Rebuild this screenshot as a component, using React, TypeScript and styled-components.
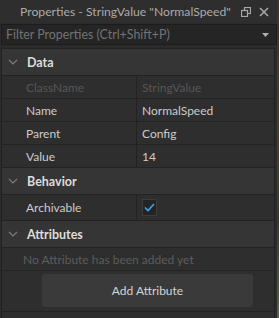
import React from "react";
import styled, { createGlobalStyle } from "styled-components";

const Global = createGlobalStyle`
  html, body { margin: 0; padding: 0; background: #2b2b2b; }
  body { font-family: "Lato", "Open Sans", sans-serif; }
`;

const Frame = styled.div`
  width: 279px;
  height: 318px;
  display: flex;
  overflow: hidden;
  background: #2b2b2b;
`;

const Main = styled.div`
  width: 277px;
  display: flex;
  flex-direction: column;
`;

const RightStrip = styled.div`
  width: 2px;
  background: linear-gradient(180deg, #3c3424 0%, #4a3f2a 40%, #3a3a2c 70%, #58604a 100%);
`;

const TitleBar = styled.div`
  height: 23px;
  display: flex;
  align-items: center;
  background: #2e2e2e;
`;

const Title = styled.div`
  flex: 1;
  min-width: 0;
  overflow: hidden;
  padding-left: 20px;
  font-size: 12.2px;
  color: #aaaaaa;
  white-space: nowrap;
`;

const TitleIcons = styled.div`
  display: flex;
  gap: 8px;
  align-items: center;
  padding-right: 8px;
`;

const Filter = styled.div`
  height: 19px;
  margin: 1px 0 0 1px;
  display: flex;
  align-items: center;
  justify-content: space-between;
  background: #252525;
  border: 1px solid #1c1c1c;
  padding: 0 7px 0 4px;
  font-size: 12.4px;
  color: #737373;
`;

const Panel = styled.div`
  margin: 3px 2px 0 1px;
  flex: 1;
  background: #2e2e2e;
  border: 1px solid #222222;
  border-bottom: none;
  display: flex;
  flex-direction: column;
`;

const Header = styled.div`
  height: 26px;
  display: flex;
  align-items: center;
  background: #353535;
  border-bottom: 1px solid #232323;
  font-size: 12.5px;
  font-weight: 700;
  color: #dddddd;
  gap: 9px;
  padding-left: 6px;
`;

const Row = styled.div<{ $tall?: boolean }>`
  height: ${(p) => (p.$tall ? 25 : 22)}px;
  display: grid;
  grid-template-columns: 135px 1fr;
  border-bottom: 1px solid #232323;
  font-size: 12px;
`;

const Cell = styled.div<{ $dim?: boolean; $value?: boolean }>`
  display: flex;
  align-items: center;
  padding-left: ${(p) => (p.$value ? 5 : 24)}px;
  color: ${(p) => (p.$dim ? "#565656" : "#cccccc")};
  border-right: ${(p) => (p.$value ? "none" : "1px solid #232323")};
`;

const Check = styled.div`
  width: 13px;
  height: 15px;
  background: #242424;
  border: 1px solid #3c3c3c;
  display: flex;
  align-items: center;
  justify-content: center;
`;

const Empty = styled.div`
  height: 22px;
  display: flex;
  align-items: center;
  padding-left: 21px;
  font-size: 12px;
  color: #5c5c5c;
  border-bottom: 1px solid #232323;
`;

const ButtonRow = styled.div`
  padding: 3px 21px 4px 40px;
  border-bottom: 1px solid #232323;
`;

const AddButton = styled.div`
  height: 33px;
  background: #3a3a3a;
  border-radius: 3px;
  display: flex;
  align-items: center;
  justify-content: center;
  font-size: 12px;
  color: #d4d4d4;
`;

const Chevron = () => (
  <svg width="10" height="6" viewBox="0 0 10 6">
    <path d="M1 1 L5 5 L9 1" fill="none" stroke="#7c7c7c" strokeWidth="1.2" />
  </svg>
);

type Prop = { name: string; value: string; dim?: boolean };

const dataProps: Prop[] = [
  { name: "ClassName", value: "StringValue", dim: true },
  { name: "Name", value: "NormalSpeed" },
  { name: "Parent", value: "Config" },
  { name: "Value", value: "14" },
];

export default function App() {
  return (
    <>
      <Global />
      <Frame>
        <Main>
          <TitleBar>
            <Title>Properties - StringValue "NormalSpeed"</Title>
            <TitleIcons>
              <svg width="10" height="10" viewBox="0 0 10 10">
                <rect x="3.5" y="0.5" width="6" height="6" fill="none" stroke="#a8a8a8" strokeWidth="1.2" />
                <rect x="0.5" y="3.5" width="6" height="6" fill="#2e2e2e" stroke="#a8a8a8" strokeWidth="1.2" />
              </svg>
              <svg width="10" height="10" viewBox="0 0 10 10">
                <path d="M1 1 L9 9 M9 1 L1 9" stroke="#a8a8a8" strokeWidth="1.6" />
              </svg>
            </TitleIcons>
          </TitleBar>
          <Filter>
            <span>Filter Properties (Ctrl+Shift+P)</span>
            <svg width="7" height="4" viewBox="0 0 7 4">
              <path d="M0 0 H7 L3.5 4 Z" fill="#b0b0b0" />
            </svg>
          </Filter>
          <Panel>
            <Header>
              <Chevron />
              Data
            </Header>
            {dataProps.map((p) => (
              <Row key={p.name}>
                <Cell $dim={p.dim}>{p.name}</Cell>
                <Cell $dim={p.dim} $value>
                  {p.value}
                </Cell>
              </Row>
            ))}
            <Header>
              <Chevron />
              Behavior
            </Header>
            <Row $tall>
              <Cell>Archivable</Cell>
              <Cell $value>
                <Check>
                  <svg width="11" height="9" viewBox="0 0 11 9">
                    <path d="M1 4.5 L4 7.5 L10 1" fill="none" stroke="#3ba4f0" strokeWidth="1.6" />
                  </svg>
                </Check>
              </Cell>
            </Row>
            <Header>
              <Chevron />
              Attributes
            </Header>
            <Empty>No Attribute has been added yet</Empty>
            <ButtonRow>
              <AddButton>Add Attribute</AddButton>
            </ButtonRow>
          </Panel>
        </Main>
        <RightStrip />
      </Frame>
    </>
  );
}
